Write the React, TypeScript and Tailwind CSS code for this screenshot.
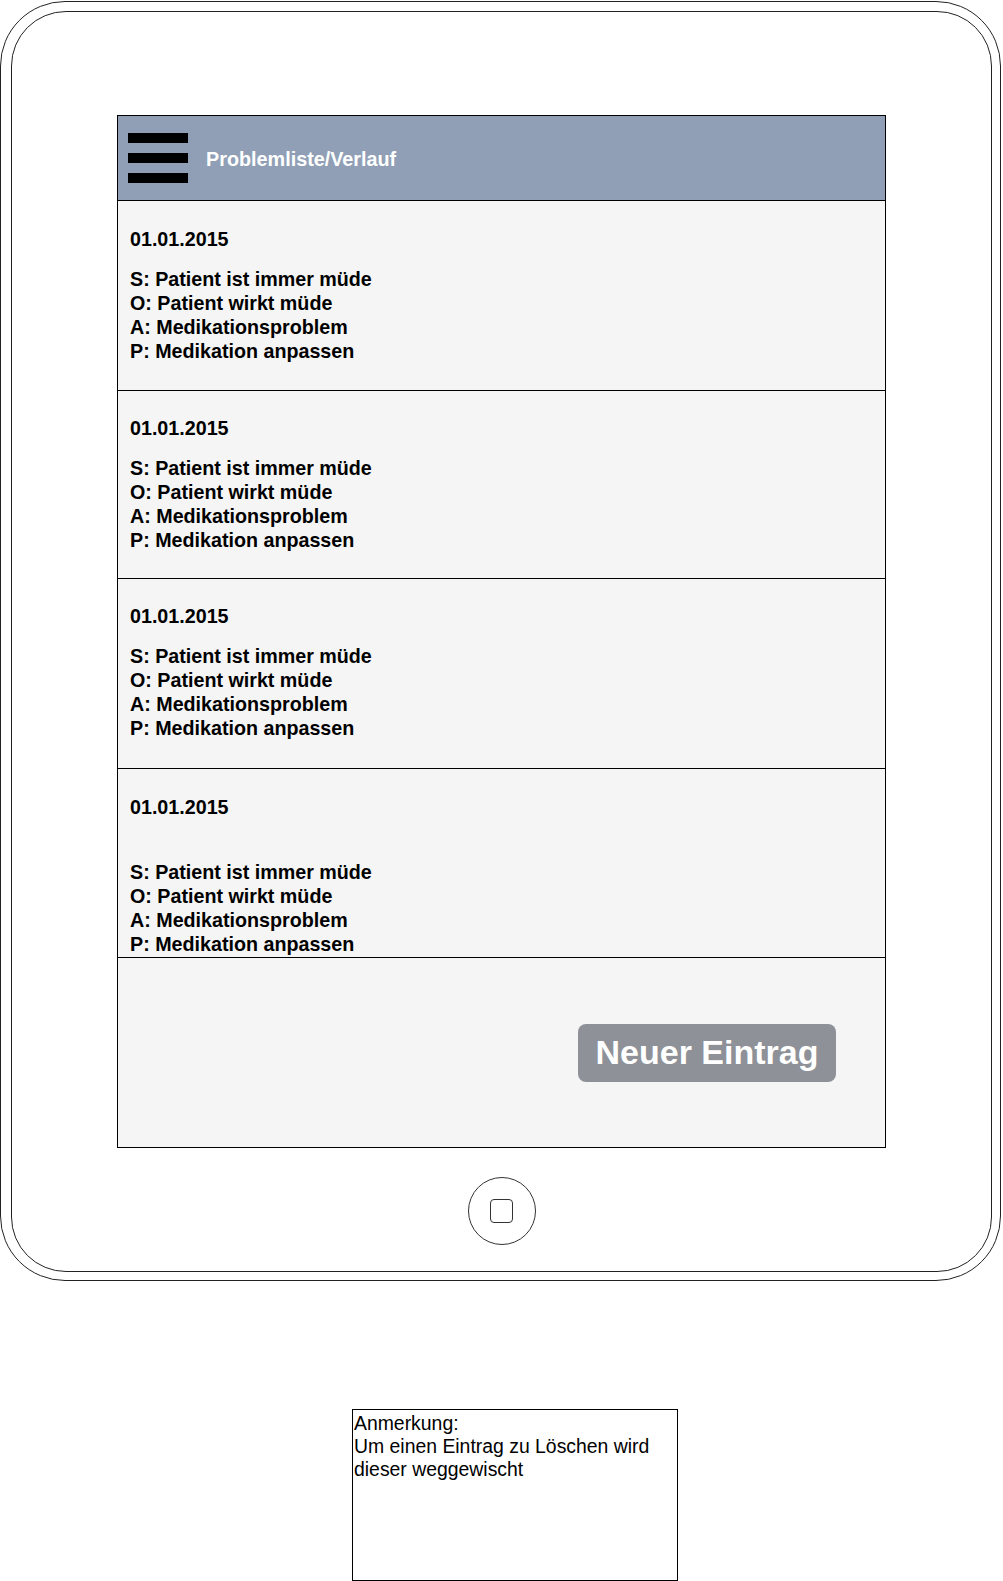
import React from "react";

const entries = [
  { extra: false, h: "h-[190px]", pt: "pt-[26px]" },
  { extra: false, h: "h-[188px]", pt: "pt-[25px]" },
  { extra: false, h: "h-[190px]", pt: "pt-[25px]" },
  { extra: true, h: "h-[189px]", pt: "pt-[26px]" },
];

function Entry({ extra, h, pt }: { extra: boolean; h: string; pt: string }) {
  return (
    <div className={`${h} ${pt} border-b border-black bg-[#f5f5f5] pl-[12px] text-[19.7px] font-bold leading-[24px] text-black`}>
      <div>01.01.2015</div>
      <div className={extra ? "mt-[41px]" : "mt-[16px]"}>
        <div>S: Patient ist immer müde</div>
        <div>O: Patient wirkt müde</div>
        <div>A: Medikationsproblem</div>
        <div>P: Medikation anpassen</div>
      </div>
    </div>
  );
}

export default function App() {
  return (
    <div className="relative w-[1003px] h-[1581px] bg-white" style={{ fontFamily: '"Liberation Sans", Arial, sans-serif' }}>
      {/* Tablet frame */}
      <div className="mt-[1px] w-[1001px] h-[1280px] rounded-[65px] border border-[#222] pt-[9px] pl-[10px]">
        <div className="flex w-[981px] h-[1261px] flex-col rounded-[55px] border border-[#222]">
          <div className="ml-[105px] mt-[103px] w-[769px] border border-black">
            {/* Header */}
            <div className="flex h-[85px] items-center border-b border-black bg-[#909fb6] pl-[10px]">
              <div className="flex flex-col gap-[10px]">
                <div className="h-[10px] w-[60px] bg-black" />
                <div className="h-[10px] w-[60px] bg-black" />
                <div className="h-[10px] w-[60px] bg-black" />
              </div>
              <div className="ml-[18px] mt-[3px] text-[19.8px] font-bold text-white">Problemliste/Verlauf</div>
            </div>
            {entries.map((e, i) => (
              <Entry key={i} extra={e.extra} h={e.h} pt={e.pt} />
            ))}
            {/* Bottom */}
            <div className="flex h-[189px] items-center justify-end bg-[#f5f5f5] pr-[49px]">
              <div className="flex h-[58px] w-[258px] items-center justify-center rounded-[8px] bg-[#8e9197] text-[34px] font-bold text-white">
                Neuer Eintrag
              </div>
            </div>
          </div>
          {/* Home button */}
          <div className="mt-[29px] flex justify-center">
            <div className="flex h-[68px] w-[68px] items-center justify-center rounded-full border border-[#333]">
              <div className="h-[24px] w-[23px] rounded-[4px] border border-[#333]" />
            </div>
          </div>
        </div>
      </div>
      {/* Annotation */}
      <div className="ml-[352px] mt-[128px] h-[172px] w-[326px] border border-black px-[1px] pt-[2px] text-[19.4px] leading-[23px] text-black">
        Anmerkung:
        <br />
        Um einen Eintrag zu Löschen wird dieser weggewischt
      </div>
    </div>
  );
}
